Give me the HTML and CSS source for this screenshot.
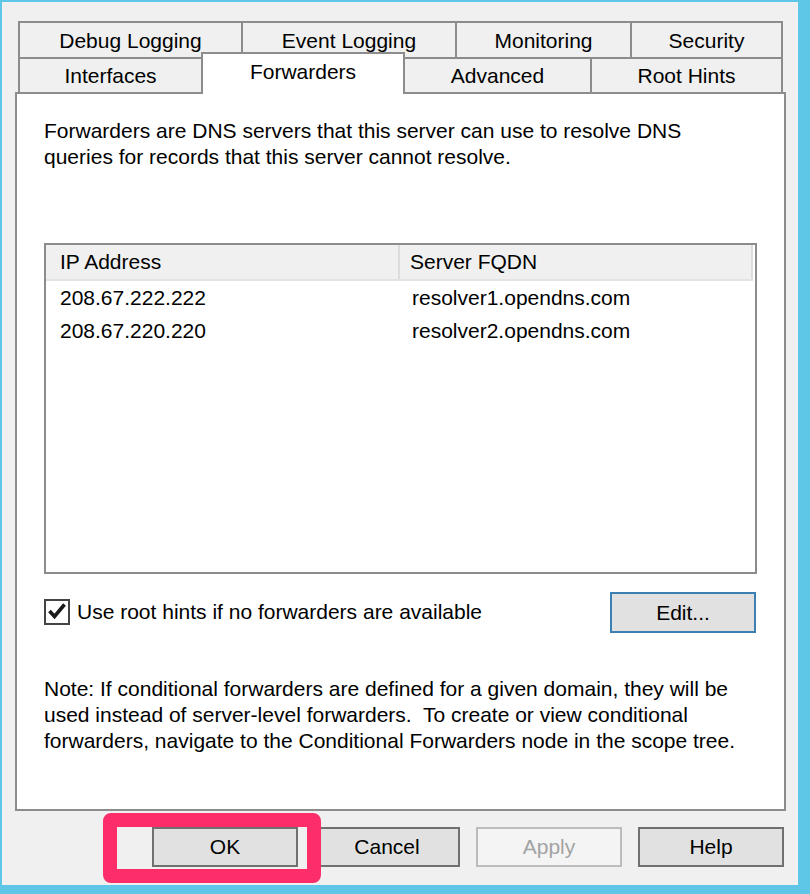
FILE: index.html
```html
<!DOCTYPE html>
<html>
<head>
<meta charset="utf-8">
<link rel="stylesheet" href="styles.css">
</head>
<body>
<div class="window">
  <div class="tabs">
    <div class="tab-row">
      <div class="tab w-debug">Debug Logging</div>
      <div class="tab w-event">Event Logging</div>
      <div class="tab w-monitor">Monitoring</div>
      <div class="tab w-security">Security</div>
    </div>
    <div class="tab-row">
      <div class="tab w-interfaces">Interfaces</div>
      <div class="tab tab-selected w-forwarders">Forwarders</div>
      <div class="tab w-advanced">Advanced</div>
      <div class="tab w-roothints">Root Hints</div>
    </div>
  </div>
  <div class="panel">
    <p class="intro">Forwarders are DNS servers that this server can use to resolve DNS<br>queries for records that this server cannot resolve.</p>
    <div class="listbox">
      <div class="list-header">
        <div class="col col-ip">IP Address</div>
        <div class="col col-fqdn">Server FQDN</div>
      </div>
      <div class="list-row">
        <div class="cell col-ip">208.67.222.222</div>
        <div class="cell col-fqdn">resolver1.opendns.com</div>
      </div>
      <div class="list-row">
        <div class="cell col-ip">208.67.220.220</div>
        <div class="cell col-fqdn">resolver2.opendns.com</div>
      </div>
    </div>
    <div class="option-row">
      <span class="checkbox">
        <svg width="22" height="22" viewBox="0 0 22 22"><path d="M3.5 10 L8.5 15.5 L18.5 3.5" fill="none" stroke="#1a1a1a" stroke-width="3.6" stroke-linejoin="miter"/></svg>
      </span>
      <span class="check-label">Use root hints if no forwarders are available</span>
      <button class="btn btn-edit">Edit...</button>
    </div>
    <p class="note">Note: If conditional forwarders are defined for a given domain, they will be<br>used instead of server-level forwarders.&nbsp; To create or view conditional<br>forwarders, navigate to the Conditional Forwarders node in the scope tree.</p>
  </div>
  <div class="buttons">
    <button class="btn">OK</button>
    <button class="btn">Cancel</button>
    <button class="btn btn-disabled">Apply</button>
    <button class="btn">Help</button>
  </div>
  <div class="highlight"></div>
</div>
</body>
</html>
```
FILE: styles.css
```css
html, body {
  margin: 0;
}
body {
  background: #5ec7e8;
  padding: 2px 12px 9px 2px;
  font-family: "Liberation Sans", Arial, sans-serif;
  font-size: 21px;
  color: #000;
}
.window {
  position: relative;
  width: 796px;
  height: 883px;
  box-sizing: border-box;
  background: #f0f0f0;
  padding-top: 19px;
}
.tabs {
  margin-left: 16px;
}
.tab-row {
  display: flex;
  height: 36px;
}
.tab-row + .tab-row {
  height: 35px;
}
.tab {
  box-sizing: border-box;
  display: flex;
  align-items: center;
  justify-content: center;
  border: 2px solid #8c8c8c;
  border-bottom: none;
  background: #f0f0f0;
  margin-left: -2px;
  white-space: nowrap;
  padding-top: 1px;
}
.tab:first-child {
  margin-left: 0;
}
.tab-selected {
  position: relative;
  z-index: 1;
  background: #fff;
  height: 42px;
  margin-top: -5px;
  margin-bottom: -2px;
  padding-top: 0;
  padding-bottom: 5px;
}
.w-debug { width: 225px; }
.w-event { width: 216px; }
.w-monitor { width: 177px; }
.w-security { width: 153px; }
.w-interfaces { width: 185px; }
.w-forwarders { width: 204px; }
.w-advanced { width: 189px; }
.w-roothints { width: 193px; }

.panel {
  margin-left: 13px;
  width: 771px;
  height: 719px;
  box-sizing: border-box;
  border: 2px solid #8c8c8c;
  background: #fff;
  padding: 24px 27px 0 27px;
}
.intro, .note {
  margin: 0;
  line-height: 26px;
  white-space: nowrap;
}
.listbox {
  margin-top: 73px;
  width: 713px;
  height: 331px;
  box-sizing: border-box;
  border: 2px solid #8c8c8c;
  background: #fff;
}
.list-header {
  display: flex;
  height: 36px;
  width: 707px;
  box-sizing: border-box;
  background: #f0f0f0;
  border-bottom: 2px solid #e3e3e3;
}
.col {
  display: flex;
  align-items: center;
  box-sizing: border-box;
  border-right: 2px solid #dcdcdc;
}
.col-ip {
  width: 354px;
  padding-left: 14px;
}
.col-fqdn {
  flex: 1;
  padding-left: 10px;
}
.list-row {
  display: flex;
  height: 33px;
}
.cell {
  display: flex;
  align-items: center;
  box-sizing: border-box;
}
.list-row .col-fqdn {
  padding-left: 12px;
}
.option-row {
  display: flex;
  align-items: center;
  margin-top: 18px;
  height: 41px;
}
.checkbox {
  width: 26px;
  height: 26px;
  box-sizing: border-box;
  border: 2px solid #444;
  background: #fff;
  display: flex;
  align-items: center;
  justify-content: center;
  margin-top: -2px;
}
.check-label {
  margin-left: 7px;
  padding-bottom: 2px;
}
.btn {
  font-family: "Liberation Sans", Arial, sans-serif;
  font-size: 21px;
  color: #000;
  width: 146px;
  height: 40px;
  box-sizing: border-box;
  border: 2px solid #707070;
  background: #e1e1e1;
  padding: 0;
  margin: 0;
}
.btn-edit {
  margin-left: auto;
  margin-right: 1px;
  height: 41px;
  border-color: #3c7fb1;
}
.btn-disabled {
  color: #a3a3a3;
  background: #f4f4f4;
  border-color: #bcbcbc;
}
.note {
  margin-top: 43px;
}
.buttons {
  display: flex;
  gap: 16px;
  margin-top: 16px;
  margin-left: 150px;
}
.highlight {
  position: absolute;
  left: 101px;
  top: 811px;
  width: 218px;
  height: 70px;
  box-sizing: border-box;
  border: 14px solid #fc2d69;
  border-radius: 8px;
}
```
